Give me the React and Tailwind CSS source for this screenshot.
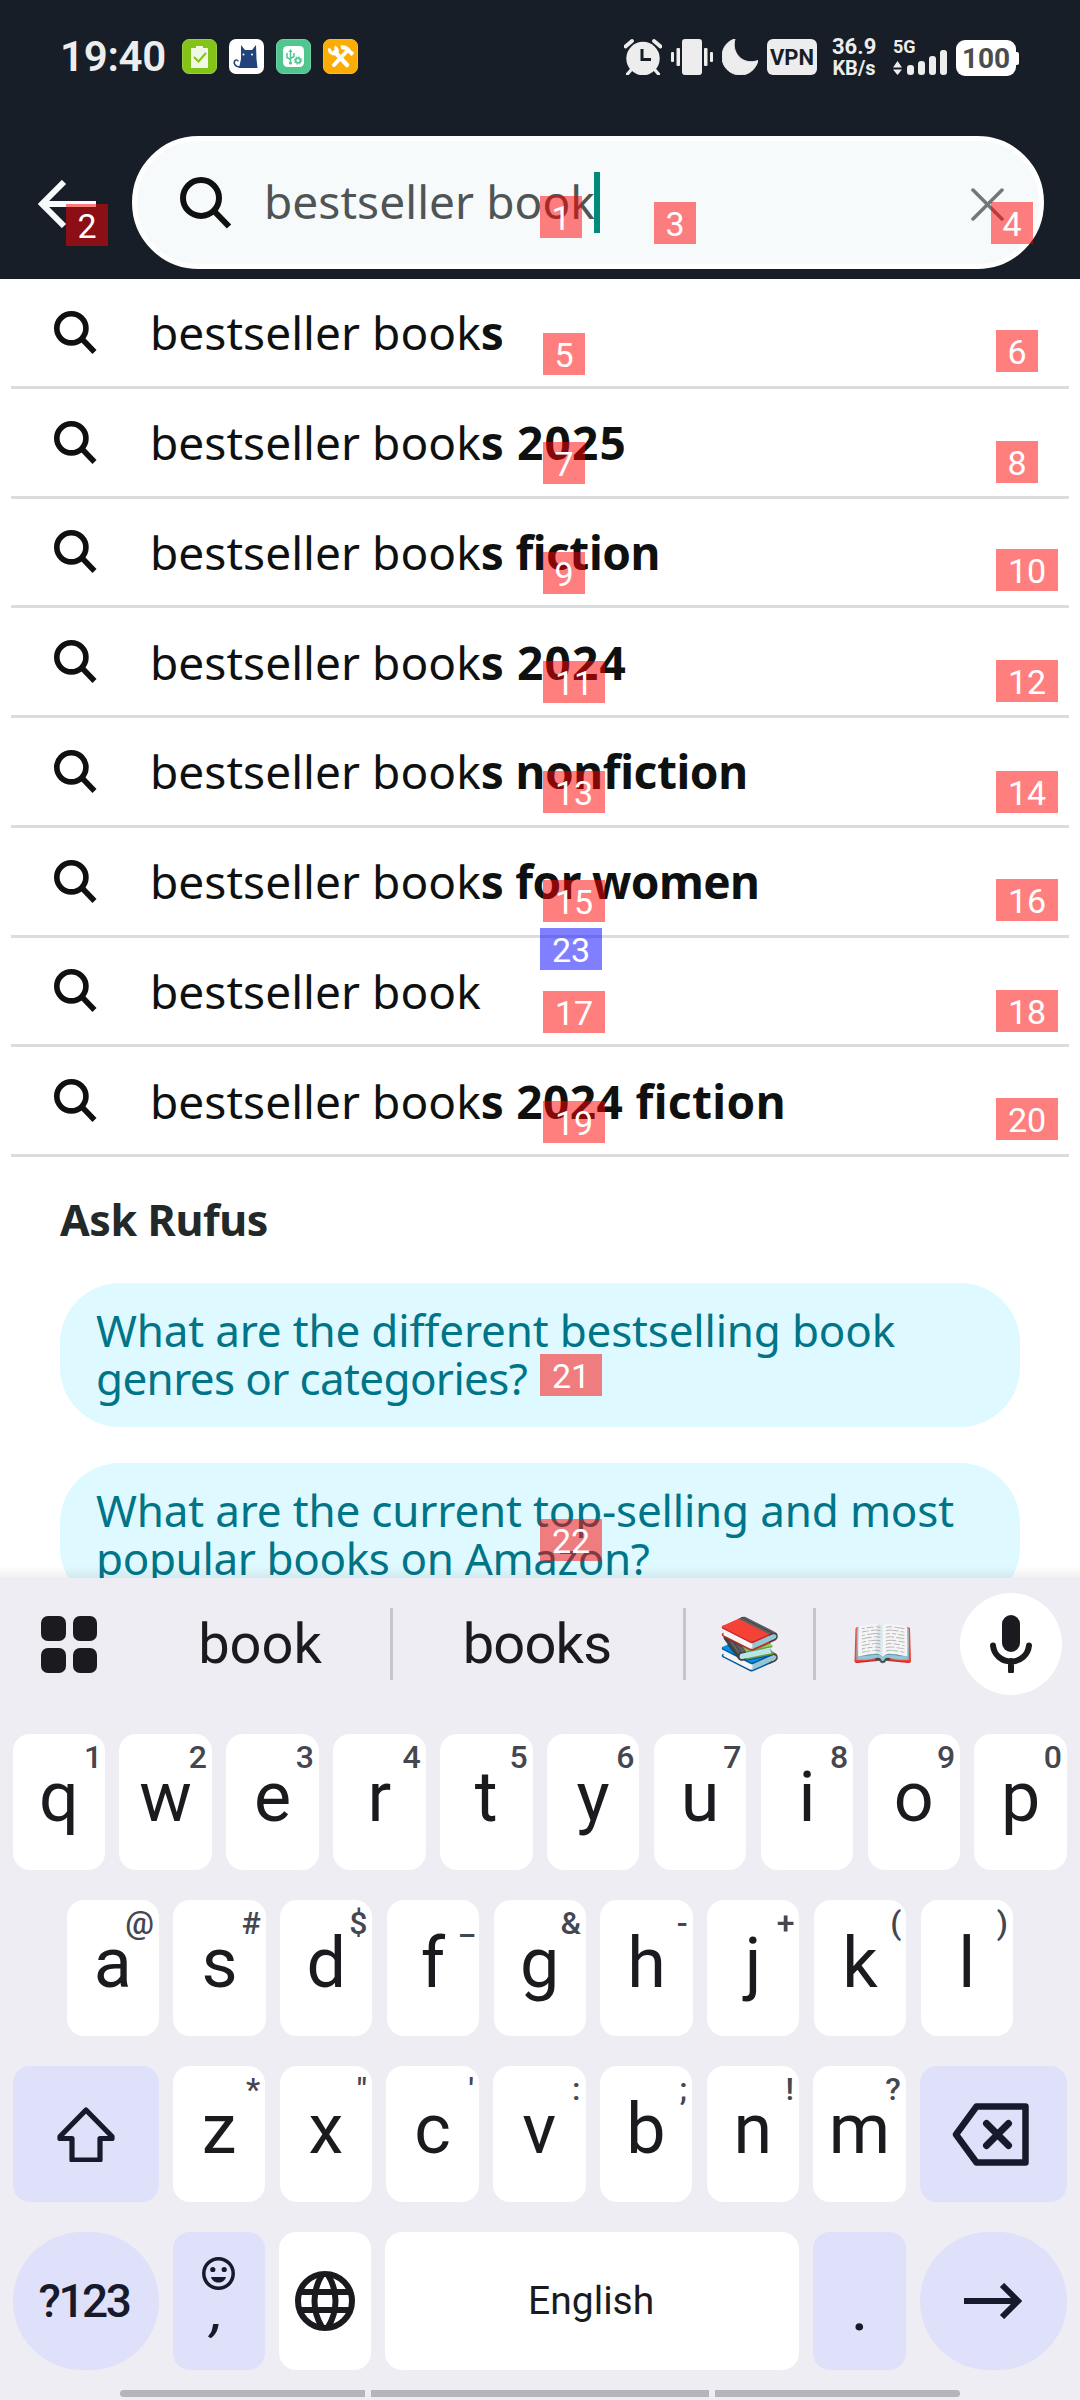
import React from "react";

const SearchGlyph = ({ className, width }) => (
  <svg viewBox="0 0 52 52" className={className} fill="none" stroke="#0f1111" strokeWidth={width}>
    <circle cx="21" cy="21" r={21 - width / 2} />
    <path d="M34.5 34.5 L49 49.5" />
  </svg>
);

const LeftIcons = () => (
  <div className="ml-[17px] flex gap-[12px]">
    <svg viewBox="0 0 35 35" className="size-[35px]">
      <rect x=".5" y=".5" width="34" height="34" rx="6.5" fill="#84c318" stroke="#97cf3d" />
      <path d="M9 9h5V7h7v2h5v20H9z" fill="#f0f8e4" />
      <path d="M12 18l4.5 4.5L24 14" fill="none" stroke="#84c318" strokeWidth="2" />
    </svg>
    <svg viewBox="0 0 35 35" className="size-[35px]">
      <rect width="35" height="35" rx="7" fill="#fff" />
      <path d="M12 6l4 5h7l4-5 .5 14 1 9H10l2-9z" fill="#1f437a" />
      <path d="M11 28c-5 0-7-4-5-6.500 1-.8 3-.5 3.200.8" fill="none" stroke="#1f437a" strokeWidth="1.500" />
      <circle cx="14.500" cy="15.500" r="1" fill="#fff" />
      <circle cx="23" cy="15.500" r="1" fill="#fff" />
    </svg>
    <svg viewBox="0 0 35 35" className="size-[35px]">
      <rect x=".5" y=".5" width="34" height="34" rx="6.500" fill="#52c68f" stroke="#6fd0a2" />
      <rect x="7" y="7" width="21" height="21" rx="4.500" fill="#fff" />
      <g fill="none" stroke="#52c68f" strokeWidth="1.500">
        <path d="M14.500 12v13M11 14v4.500l3.500 2M18 14v3.500l-3.500 2" />
        <circle cx="22" cy="21.500" r="2.400" strokeWidth="1.800" />
        <circle cx="22" cy="21.500" r="3.700" strokeDasharray="1.500 1.400" strokeWidth="1" />
      </g>
      <path d="M12.500 13l2-3 2 3z" fill="#52c68f" />
      <circle cx="14.500" cy="24" r="1.600" fill="#52c68f" />
    </svg>
    <svg viewBox="0 0 35 35" className="size-[35px]">
      <rect x=".5" y=".5" width="34" height="34" rx="6.500" fill="#fbad05" stroke="#fdb927" />
      <g fill="none" stroke="#fff">
        <path d="M12 13l12 13" strokeWidth="4.500" strokeLinecap="round" />
        <path d="M24 12L11 26" strokeWidth="4" strokeLinecap="round" />
        <path d="M6.500 9.500a4.500 4.500 0 0 0 7.500 4 4.500 4.500 0 0 0-2.500-5.500" strokeWidth="3.200" />
        <path d="M18 8.500c4-1 6 .5 8.500 4l3.500 3" strokeWidth="4" />
      </g>
    </svg>
  </div>
);

const StatusBar = () => (
  <div className="flex h-[97px] items-start pt-[39px] pl-[60px] text-[#ededed]">
    <div className="w-[105px] text-[42px] leading-[36px] font-semibold tracking-[-0.300px] whitespace-nowrap">19:40</div>
    <LeftIcons />
    <div className="ml-[266px] flex">
      <svg viewBox="0 0 38 36" className="h-[36px] w-[38px]">
        <circle cx="19" cy="19.500" r="16.700" fill="#ededed" />
        <path d="M1.500 7.500L8 2M36.500 7.500L30 2" stroke="#ededed" strokeWidth="3.800" strokeLinecap="round" />
        <path d="M7 31l-3.500 4M31 31l3.500 4" stroke="#ededed" strokeWidth="3.200" strokeLinecap="round" />
        <path d="M18 10v10.500h9" fill="none" stroke="#171e28" strokeWidth="3" />
      </svg>
      <svg viewBox="0 0 42 36" className="ml-[9px] h-[36px] w-[42px]" fill="#ededed">
        <rect x="11" width="20" height="36" rx="3" />
        <rect x="0" y="13" width="3" height="10" rx="1" />
        <rect x="5.500" y="9" width="3.500" height="18" rx="1" />
        <rect x="33" y="9" width="3.500" height="18" rx="1" />
        <rect x="39" y="13" width="3" height="10" rx="1" />
      </svg>
      <svg viewBox="0 0 36 36" className="ml-[9px] h-[36px] w-[36px]" fill="#ededed">
        <path d="M13 0C9 13 20 27 36 21.500C34 30 27 36 18.500 36C8 36 0 28 0 18C0 9 5 2 13 0z" stroke="#ededed" strokeLinejoin="round" />
      </svg>
      <div className="ml-[9px] h-[36px] w-[50px] rounded-[6px] bg-[#ededed] text-center text-[22px] leading-[37px] font-bold text-[#171e28]">VPN</div>
      <div className="ml-[15px] w-[44px] text-center font-bold whitespace-nowrap">
        <div className="text-[22px] leading-[16px]">36.9</div>
        <div className="mt-[5px] text-[20px] leading-[17px]">KB/s</div>
      </div>
      <div className="ml-[17px] w-[54px]">
        <div className="text-[18px] leading-[15px] font-bold">5G</div>
        <svg viewBox="0 0 54 25" className="-mt-[4px] h-[25px] w-[54px]" fill="#ededed">
          <path d="M0 17.500l4.500-6.500 4.500 6.500zM0 19.500h9L4.500 25z" />
          <rect x="14" y="15" width="7" height="10" rx="3" />
          <rect x="25" y="11" width="7" height="14" rx="3" />
          <rect x="36" y="6" width="7" height="19" rx="3" />
          <rect x="47" y="0" width="7" height="25" rx="3" />
        </svg>
      </div>
      <div className="ml-[9px] flex items-center">
        <div className="h-[36px] w-[60px] rounded-[9px] bg-white text-center text-[28px] leading-[37px] font-bold text-[#4c4c4c]">100</div>
        <div className="h-[13px] w-[3px] rounded-r-[2px] bg-white" />
      </div>
    </div>
  </div>
);

const Header = () => (
  <header className="h-[279px] bg-[#171e28]">
    <StatusBar />
    <div className="mt-[39px] flex h-[133px] items-center pl-[38px]">
      <svg viewBox="0 0 58 48" className="mt-[3px] h-[48px] w-[58px]" fill="none" stroke="#f7fafa" strokeWidth="6">
        <path d="M26 2L4 24l22 22M4 24h54" />
      </svg>
      <div className="ml-[36px] flex h-[133px] w-[912px] items-center rounded-full border-[5px] border-white bg-[#f7fafa]">
        <SearchGlyph className="ml-[43px] size-[52px]" width={6} />
        <div className="ml-[32px] pb-[4px] font-['Noto_Sans',sans-serif] text-[46px] leading-[126px] tracking-[0.060px] whitespace-nowrap text-[#4f5454]">bestseller book</div>
        <div className="-ml-[1px] h-[61px] w-[6px] bg-[#008a7b]" />
        <svg viewBox="0 0 33 33" className="mt-[3px] ml-[371px] size-[33px]" fill="none" stroke="#737777" strokeWidth="3.500" strokeLinecap="round">
          <path d="M2 2l29 29M31 2L2 31" />
        </svg>
      </div>
    </div>
  </header>
);

const suggestions = [
  ["bestseller book", "s", ""],
  ["bestseller book", "s", "2025", "tracking-[1.200px]"],
  ["bestseller book", "s", "fiction", "tracking-[-0.450px]"],
  ["bestseller book", "s", "2024", "tracking-[1.200px]"],
  ["bestseller book", "s", "nonfiction", "tracking-[-0.400px]"],
  ["bestseller book", "s", "for women", "tracking-[-0.600px]"],
  ["bestseller book", "", ""],
  ["bestseller book", "s", "2024 fiction", "tracking-[0.400px]"],
];

const Suggestions = () => (
  <ul className="mx-[11px] font-['Noto_Sans',sans-serif] text-[46px] text-[#0f1111]">
    {suggestions.map(([plain, bold, rest, track], i) => (
      <li key={i} className="flex h-[109.750px] items-center border-b-[3px] border-[#dcdcdc] pl-[43px]">
        <SearchGlyph className="size-[43px]" width={6.800} />
        <p className="ml-[53px] leading-[106px] tracking-[0.050px] whitespace-pre">
          {plain}
          <b>{bold}</b>
          {rest && <b className={track}>{" " + rest}</b>}
        </p>
      </li>
    ))}
  </ul>
);

const Question = ({ lines, second }) => (
  <div className="h-[144px] shrink-0 rounded-[60px] bg-[#def9ff] pt-[23px] pl-[36px] text-[44px] leading-[48px] whitespace-nowrap text-[#007587]">
    <p className="tracking-[-0.180px]">{lines[0]}</p>
    <p className={second}>{lines[1]}</p>
  </div>
);

const Rufus = () => (
  <section className="flex h-[421px] flex-col overflow-hidden px-[60px] font-['Noto_Sans',sans-serif]">
    <h2 className="h-[126px] shrink-0 text-[43px] leading-[125px] font-bold tracking-[-0.400px] text-[#232828]">Ask Rufus</h2>
    <div className="flex flex-col gap-[36px]">
      <Question lines={["What are the different bestselling book", "genres or categories?"]} second="tracking-[-0.640px]" />
      <Question lines={["What are the current top-selling and most", "popular books on Amazon?"]} second="tracking-[-0.380px]" />
    </div>
  </section>
);

const Key = ({ label, hint }) => (
  <div className="relative h-[136px] flex-1 rounded-[17px] bg-white text-center">
    <span className="block text-[70px] leading-[126px] text-[#1b1b1f]">{label}</span>
    <span
      className={
        "absolute top-0 text-[32px] leading-[46px] font-medium text-[#45464f] " +
        (hint === "1" ? "right-[3px]" : "right-[5px]")
      }
    >
      {hint}
    </span>
  </div>
);

const row1 = ["q1", "w2", "e3", "r4", "t5", "y6", "u7", "i8", "o9", "p0"];
const row2 = ["a@", "s#", "d$", "f_", "g&", "h-", "j+", "k(", "l)"];
const row3 = ["z*", 'x"', "c'", "v:", "b;", "n!", "m?"];
const keys = (row) => row.map((k) => <Key key={k} label={k[0]} hint={k[1]} />);

const Divider = () => <div className="h-[72px] w-[3px] bg-[#c6c5cf]" />;

const CandidateBar = () => (
  <div className="flex h-[132px] items-center pl-[41px] text-[56px] leading-[130px] text-[#1b1b1f]">
    <div className="grid w-[56px] grid-cols-2 gap-[7px]">
      {[0, 1, 2, 3].map((n) => (
        <div key={n} className="h-[25px] rounded-[7px] bg-[#1b1b1f]" />
      ))}
    </div>
    <div className="ml-[33px] w-[260px] text-center">book</div>
    <Divider />
    <div className="w-[290px] pr-[2px] text-center tracking-[-0.800px]">books</div>
    <Divider />
    <div className="w-[127px] text-center text-[51px]">📚</div>
    <Divider />
    <div className="w-[144px] pr-[10px] text-center text-[51px]">📖</div>
    <div className="flex size-[102px] items-center justify-center rounded-full bg-white">
      <svg viewBox="0 0 42 58" className="h-[58px] w-[42px]">
        <rect x="12" width="18" height="37" rx="9" fill="#1b1b1f" />
        <path d="M3 30.500c1 9.500 8.500 16 18 16s17-6.500 18-16M21 46v10" fill="none" stroke="#1b1b1f" strokeWidth="6" strokeLinecap="round" />
      </svg>
    </div>
  </div>
);

const Keyboard = () => (
  <section className="h-[822px] bg-[#eeedf3]">
    <CandidateBar />
    <div className="mt-[24px] flex flex-col gap-[30px] pr-[13px] pl-[12.500px]">
      <div className="flex gap-[14.300px]">{keys(row1)}</div>
      <div className="flex gap-[14.300px] px-[54px]">{keys(row2)}</div>
      <div className="flex gap-[14.300px]">
        <div className="flex h-[136px] w-[146px] items-center justify-center rounded-[17px] bg-[#dfe0fa]">
          <svg viewBox="0 0 58 56" className="h-[56px] w-[58px]" fill="none" stroke="#161a2b" strokeWidth="5.200" strokeLinejoin="round">
            <path d="M29 4L3 30.500v2h12V54h28V32.500h12v-2z" />
          </svg>
        </div>
        {keys(row3)}
        <div className="flex h-[136px] w-[147px] items-center justify-center rounded-[17px] bg-[#dfe0fa] pr-[6px]">
          <svg viewBox="0 0 77 63" className="h-[63px] w-[77px]" fill="none" stroke="#161a2b" strokeWidth="6.500" strokeLinejoin="round">
            <path d="M24.500 3.500H73.500V59.500H24.500L4 31.500z" />
            <path d="M34.500 20.500l22 22M56.500 20.500l-22 22" strokeWidth="7" strokeLinecap="round" />
          </svg>
        </div>
      </div>
      <div className="flex gap-[14.300px] text-[#161a2b]">
        <div className="h-[138px] w-[146px] rounded-full bg-[#dfe0fa] pr-[3px] text-center text-[46px] leading-[138px] font-medium tracking-[-2.500px]">?123</div>
        <div className="flex h-[138px] w-[92px] flex-col items-center rounded-[17px] bg-[#dfe0fa] pt-[25px] pr-[1px]">
          <svg viewBox="0 0 33 33" className="size-[33px]" fill="#161a2b">
            <circle cx="16.500" cy="16.500" r="14.700" fill="none" stroke="#161a2b" strokeWidth="3.500" />
            <circle cx="10.800" cy="12.500" r="2.600" />
            <circle cx="22.200" cy="12.500" r="2.600" />
            <path d="M9 20h15c-.8 3.500-3.800 5.500-7.500 5.500S9.800 23.500 9 20z" />
          </svg>
          <span className="-mt-[2px] -skew-x-12 text-[52px] leading-[50px] font-medium">,</span>
        </div>
        <div className="flex h-[138px] w-[92px] items-center justify-center rounded-[17px] bg-white">
          <svg viewBox="0 0 60 60" className="size-[60px]" fill="none" stroke="#1b1b1f" strokeWidth="6">
            <circle cx="30" cy="30" r="27" />
            <path d="M5 21h50M5 39h50M27 4C17 20 17 40 27 56M33 4c10 16 10 36 0 52" />
          </svg>
        </div>
        <div className="h-[138px] flex-1 rounded-[17px] bg-white pr-[2px] text-center text-[39px] leading-[138px] text-[#1b1b1f]">English</div>
        <div className="h-[138px] w-[92.500px] rounded-[17px] bg-[#dfe0fa] pt-[60px] text-center text-[56px] leading-[38px] font-medium">.</div>
        <div className="flex h-[138px] w-[147px] items-center justify-center rounded-full bg-[#dfe0fa] pr-[2px]">
          <svg viewBox="0 0 58 36" className="h-[36px] w-[58px]" fill="none" stroke="#161a2b" strokeWidth="6">
            <path d="M0 18h54M38 2l16 16-16 16" />
          </svg>
        </div>
      </div>
    </div>
    <div className="mx-[120px] mt-[20px] flex h-[7px] gap-[6px]">
      <div className="w-[245px] rounded-l-full bg-[#b5b4ba]" />
      <div className="w-[338px] bg-[#b5b4ba]" />
      <div className="w-[245px] rounded-r-full bg-[#b5b4ba]" />
    </div>
  </section>
);

const marks = [
  [1, 540, 196], [2, 66, 204], [3, 654, 202], [4, 991, 202],
  [5, 543, 333], [6, 996, 330], [7, 543, 442], [8, 996, 441],
  [9, 543, 552], [10, 996, 549], [11, 543, 661], [12, 996, 660],
  [13, 543, 771], [14, 996, 771], [15, 543, 880], [16, 996, 879],
  [17, 543, 991], [18, 996, 990], [19, 543, 1101], [20, 996, 1098],
  [21, 540, 1354], [22, 540, 1519], [23, 540, 928],
];

const Mark = ({ n, x, y }) => (
  <div
    className={
      "absolute h-[42px] text-center text-[34px] leading-[45px] text-white " +
      (n > 9 ? "w-[62px] " : "w-[42px] ") +
      (n === 23 ? "bg-[#0000ff]/50" : "bg-[#ff0000]/50")
    }
    style={{ left: x, top: y }}
  >
    {n}
  </div>
);

export default function App() {
  return (
    <div className="relative h-[2400px] w-[1080px] overflow-hidden bg-white font-['Roboto',sans-serif]">
      <Header />
      <Suggestions />
      <Rufus />
      <Keyboard />
      <div className="absolute top-[1566px] left-0 h-[12px] w-full bg-gradient-to-b from-black/0 to-black/6" />
      {marks.map(([n, x, y]) => (
        <Mark key={n} n={n} x={x} y={y} />
      ))}
    </div>
  );
}
